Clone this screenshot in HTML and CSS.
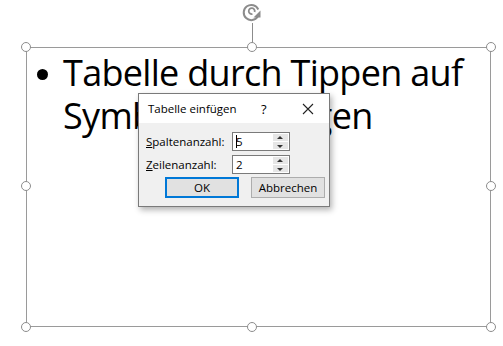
FILE: index.html
```html
<!DOCTYPE html>
<html>
<head>
<meta charset="utf-8">
<title>Tabelle einfügen</title>
<link rel="stylesheet" href="styles.css">
</head>
<body>
  <div class="slide">
    <div class="rotate">
      <svg width="22" height="22" viewBox="0 0 22 22">
        <path d="M16.8 14.5 A7.6 7.6 0 1 1 17.3 7.5" fill="none" stroke="#8c8c8c" stroke-width="2"/>
        <path d="M11.5 12 A3 3 0 1 1 13.6 10" fill="none" stroke="#8c8c8c" stroke-width="1.8"/>
        <path d="M12.5 15.5 L19.5 15.5 L19.5 8.5 Z" fill="#8c8c8c"/>
      </svg>
    </div>
    <div class="stem"></div>

    <div class="frame">
      <span class="handle h-tl"></span>
      <span class="handle h-tc"></span>
      <span class="handle h-tr"></span>
      <span class="handle h-ml"></span>
      <span class="handle h-mr"></span>
      <span class="handle h-bl"></span>
      <span class="handle h-bc"></span>
      <span class="handle h-br"></span>

      <ul class="bullets">
        <li>Tabelle durch Tippen auf Symbol hinzufügen</li>
      </ul>
    </div>

    <div class="dialog">
      <div class="dlg-title">
        <span class="dlg-name">Tabelle einfügen</span>
        <span class="dlg-help">?</span>
        <span class="dlg-close">
          <svg width="12" height="12" viewBox="0 0 12 12">
            <path d="M1 1 L11 11 M11 1 L1 11" stroke="#222" stroke-width="1.1"/>
          </svg>
        </span>
      </div>
      <div class="dlg-body">
        <div class="field">
          <label><u>S</u>paltenanzahl:</label>
          <div class="spin">
            <span class="spin-val"><i class="caret"></i>5</span>
            <span class="spin-btns">
              <b class="up"></b>
              <b class="down"></b>
            </span>
          </div>
        </div>
        <div class="field">
          <label><u>Z</u>eilenanzahl:</label>
          <div class="spin">
            <span class="spin-val">2</span>
            <span class="spin-btns">
              <b class="up"></b>
              <b class="down"></b>
            </span>
          </div>
        </div>
        <div class="actions">
          <button class="btn btn-default">OK</button>
          <button class="btn">Abbrechen</button>
        </div>
      </div>
    </div>
  </div>
</body>
</html>
```

FILE: styles.css
```css
body {
  margin: 0;
  background: #fff;
  font-family: "Open Sans", "Noto Sans", sans-serif;
}

.slide {
  position: relative;
  width: 503px;
  height: 346px;
  overflow: hidden;
}

.rotate {
  position: absolute;
  left: 241px;
  top: 2px;
  width: 22px;
  height: 22px;
}

.stem {
  position: absolute;
  left: 252px;
  top: 23px;
  width: 1px;
  height: 24px;
  background: #8c8c8c;
}

.frame {
  position: relative;
  margin: 47px 0 0 26px;
  width: 463px;
  height: 278px;
  border: 1px solid #9a9a9a;
}

.handle {
  position: absolute;
  width: 8px;
  height: 8px;
  border: 1.5px solid #8c8c8c;
  border-radius: 50%;
  background: #fff;
  box-sizing: content-box;
}
.h-tl { left: -6px; top: -6px; }
.h-tc { left: 220px; top: -6px; }
.h-tr { right: -6px; top: -6px; }
.h-ml { left: -6px; top: 133px; }
.h-mr { right: -6px; top: 133px; }
.h-bl { left: -6px; bottom: -6px; }
.h-bc { left: 220px; bottom: -6px; }
.h-br { right: -6px; bottom: -6px; }

.bullets {
  margin: 0;
  padding: 3px 10px 0 36px;
  font-size: 36px;
  letter-spacing: -0.7px;
  line-height: 43px;
  color: #000;
  list-style: none;
}
.bullets li {
  position: relative;
}
.bullets li::before {
  content: "";
  position: absolute;
  left: -26px;
  top: 18px;
  width: 11px;
  height: 11px;
  border-radius: 50%;
  background: #000;
}

.dialog {
  position: absolute;
  left: 138px;
  top: 93px;
  width: 192px;
  height: 114px;
  border: 1px solid #7a7a7a;
  box-sizing: border-box;
  background: #f0f0f0;
  box-shadow: 2px 3px 6px rgba(0, 0, 0, 0.3);
  font-size: 11.5px;
  color: #000;
}

.dlg-title {
  display: flex;
  align-items: center;
  height: 29px;
  background: #fff;
  padding-left: 9px;
}
.dlg-name {
  width: 113px;
}
.dlg-help {
  width: 41px;
  font-size: 13px;
}
.dlg-close {
  display: flex;
}

.dlg-body {
  padding: 8px 0 0 7px;
}

.field {
  display: flex;
  align-items: center;
  height: 20px;
  margin-bottom: 3px;
}
.field label {
  width: 86px;
}
.field u {
  text-decoration: underline;
}

.spin {
  display: flex;
  width: 58px;
  height: 19px;
  border: 1px solid #7a7a7a;
  box-sizing: border-box;
  background: #fff;
}
.spin-val {
  flex: 1;
  display: flex;
  align-items: center;
  padding-left: 3px;
  position: relative;
}
.caret {
  position: absolute;
  left: 3px;
  top: 2px;
  width: 1px;
  height: 13px;
  background: #000;
}
.spin-btns {
  width: 15px;
  display: flex;
  flex-direction: column;
  padding: 1px;
  gap: 1px;
}
.spin-btns b {
  flex: 1;
  background: #e6e6e6;
  position: relative;
}
.spin-btns b::after {
  content: "";
  position: absolute;
  left: 4px;
  border-left: 3px solid transparent;
  border-right: 3px solid transparent;
}
.spin-btns .up::after {
  top: 2px;
  border-bottom: 3px solid #333;
}
.spin-btns .down::after {
  top: 3px;
  border-top: 3px solid #333;
}

.actions {
  display: flex;
  gap: 12px;
  margin: 2px 0 0 19px;
}
.btn {
  width: 74px;
  height: 21px;
  padding: 0;
  font: inherit;
  color: #000;
  background: #e1e1e1;
  border: 1px solid #adadad;
}
.btn-default {
  border: 2px solid #0078d7;
}
```
